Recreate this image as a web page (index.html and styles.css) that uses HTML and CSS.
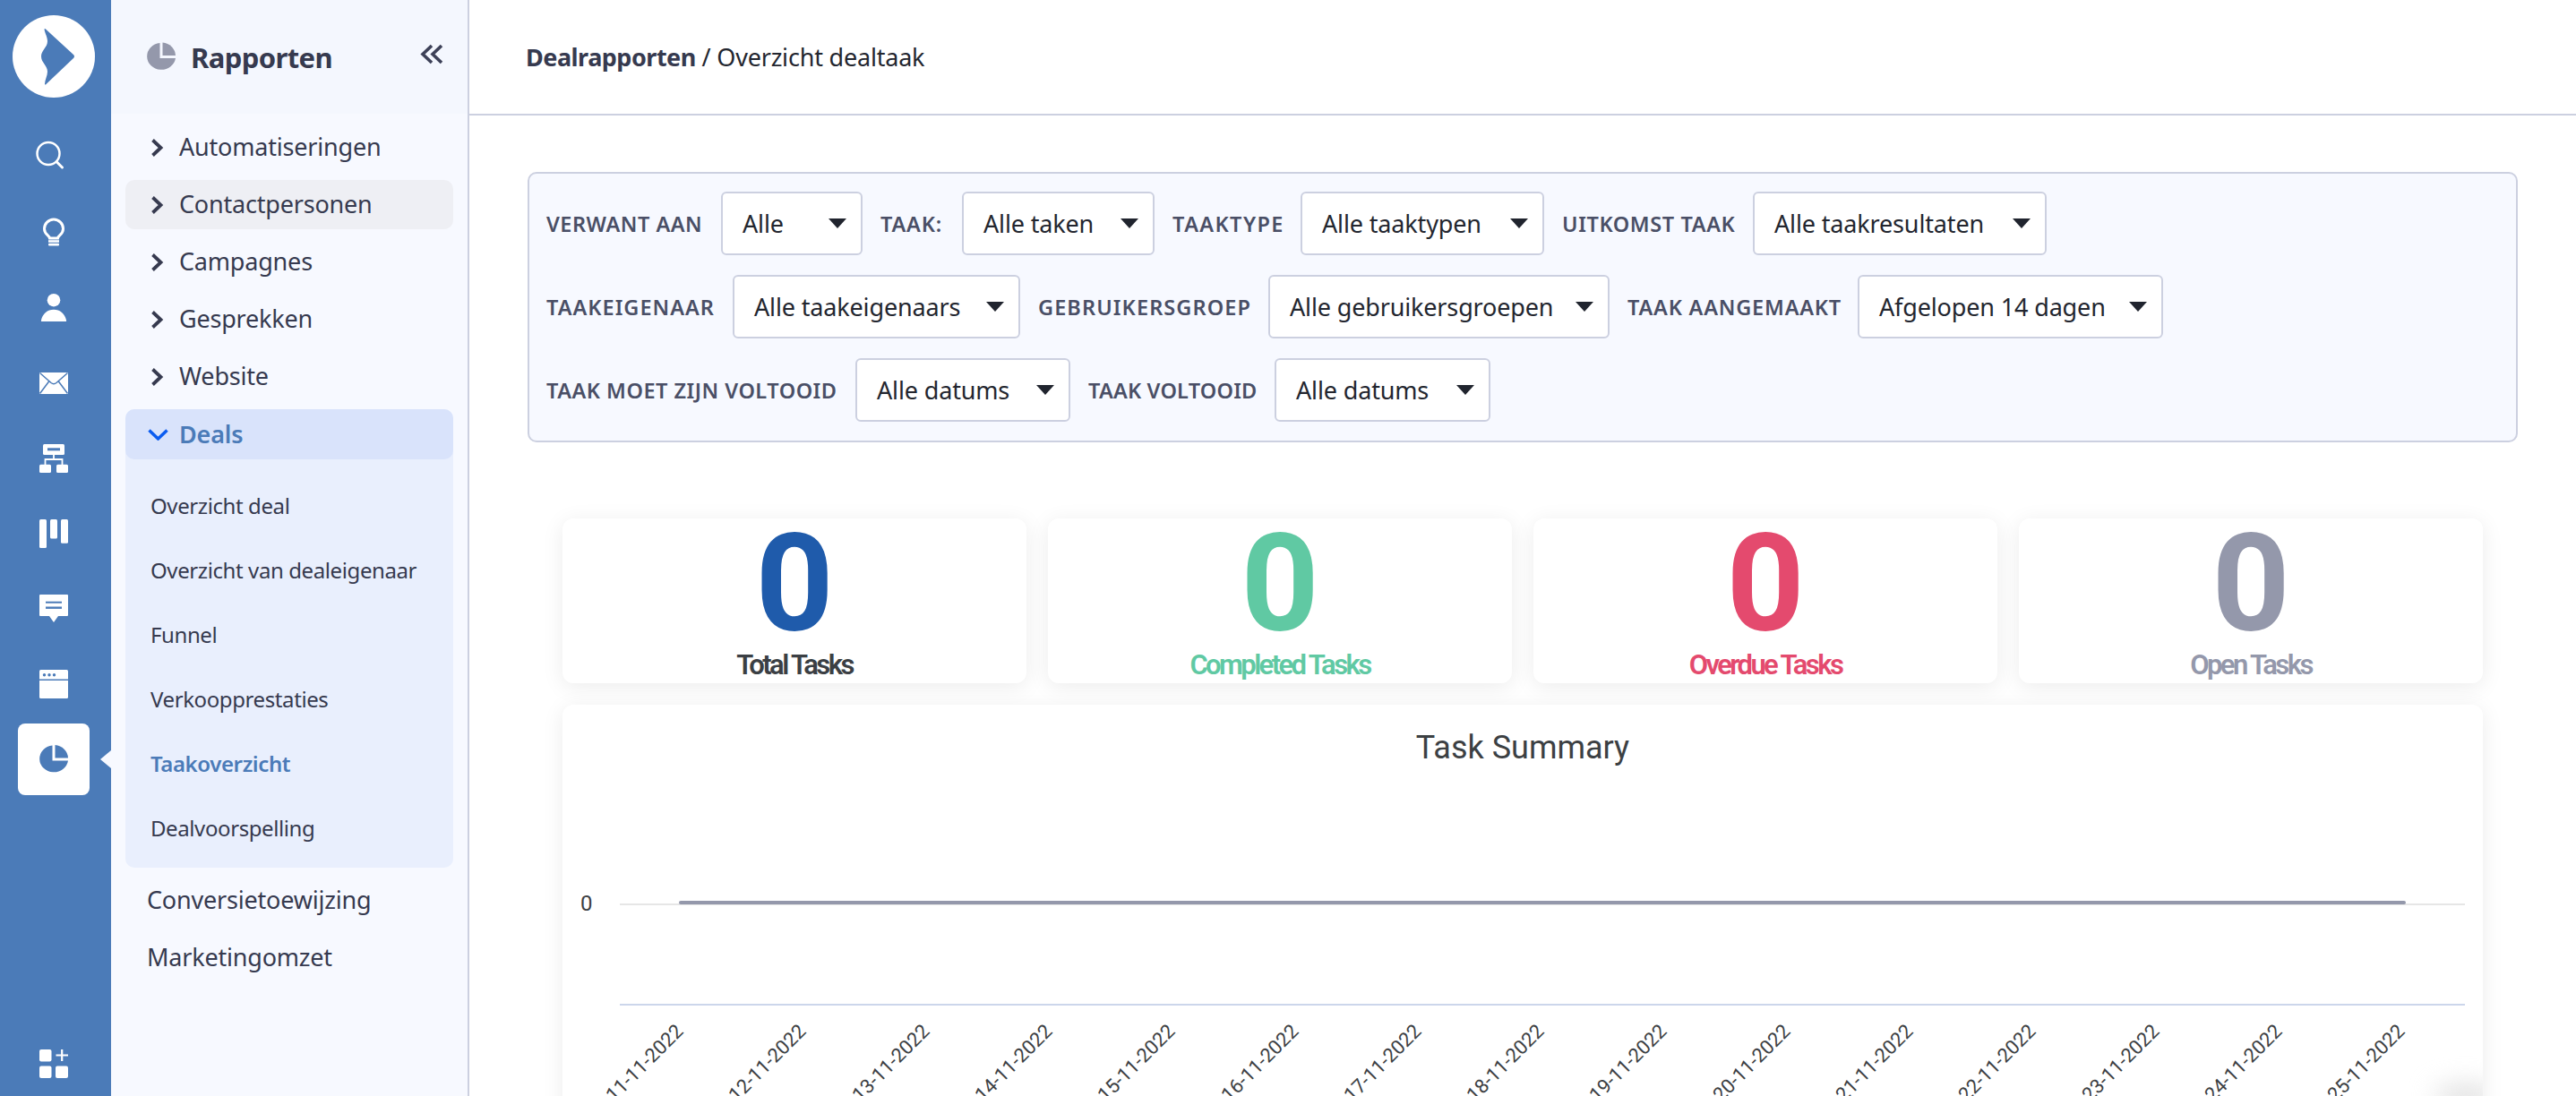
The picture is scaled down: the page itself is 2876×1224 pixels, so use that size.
FILE: index.html
```html
<!DOCTYPE html>
<html lang="nl">
<head>
  <meta charset="UTF-8">
  <title>Overzicht dealtaak</title>
  <link rel="stylesheet" href="styles.css">
</head>
<body>
  <!-- Smalle navigatiebalk -->
  <nav class="rail">
    <div class="logo">
      <svg width="92" height="92" viewBox="0 0 92 92"><path d="M35.5 15.5 Q36 14.5 37 15.5 L68 44 Q70 46 68 48 L37.500 77 Q36.500 78 36 77 C36 72 39 68 39 63 C39 56 32 53 32 46 C32 39 39 36 39 29 C39 24 36 20 35.500 15.500Z"/></svg>
    </div>
    <a class="rail-item">
      <svg class="ic" viewBox="0 0 32 32"><circle cx="10" cy="11.500" r="12.500" fill="none" stroke="#fff" stroke-width="2.500"/><path d="M19.500 21 L25.500 27" stroke="#fff" stroke-width="3" stroke-linecap="round"/></svg>
    </a>
    <a class="rail-item">
      <svg class="ic" viewBox="0 0 32 32"><path d="M11.500 22 C11 18.500 5.500 18 5.500 11.500 a10.500 10.500 0 0 1 21 0 C26.500 18 21 18.500 20.500 22 Z" fill="none" stroke="#fff" stroke-width="3"/><rect x="10" y="24.200" width="12" height="2.500" fill="#fff"/><rect x="10" y="27.800" width="12" height="2.600" rx="1" fill="#fff"/></svg>
    </a>
    <a class="rail-item">
      <svg class="ic" viewBox="0 0 32 32"><circle cx="16" cy="7.200" r="7.300" fill="#fff"/><path d="M2.500 31 Q1.500 31 2 29.500 C3.500 22.500 9 17.800 16 17.800 S28.500 22.500 30 29.500 Q30.500 31 29.500 31Z" fill="#fff"/></svg>
    </a>
    <a class="rail-item">
      <svg class="ic" viewBox="0 0 32 32"><rect x="0" y="4" width="32" height="24" fill="#fff"/><path d="M0.500 4.500 L13 15.500 Q16 18 19 15.500 L31.500 4.500 M0.500 27.500 L11 13.500 M31.500 27.500 L21 13.500" fill="none" stroke="#4b7bb8" stroke-width="1.500"/></svg>
    </a>
    <a class="rail-item">
      <svg class="ic" viewBox="0 0 32 32"><rect x="4" y="0" width="24" height="12" rx="1.500" fill="#fff"/><rect x="9" y="4.300" width="14" height="3" fill="#4b7bb8"/><path d="M16 12 V17 M6.500 23 V17 H25.500 V23" fill="none" stroke="#fff" stroke-width="1.800"/><rect x="0" y="22.700" width="13" height="9.300" rx="1.500" fill="#fff"/><rect x="19" y="22.700" width="13" height="9.300" rx="1.500" fill="#fff"/></svg>
    </a>
    <a class="rail-item">
      <svg class="ic" viewBox="0 0 32 32"><rect x="0" y="0" width="8" height="32" rx="1.500" fill="#fff"/><rect x="12" y="0" width="8" height="21.500" rx="1.500" fill="#fff"/><rect x="24" y="0" width="8" height="26.700" rx="1.500" fill="#fff"/></svg>
    </a>
    <a class="rail-item">
      <svg class="ic" viewBox="0 0 32 32"><path d="M1 0 H31 Q32 0 32 1 V23 Q32 24 31 24 H21 L16 31 L11 24 H1 Q0 24 0 23 V1 Q0 0 1 0Z" fill="#fff"/><rect x="7" y="7.700" width="18" height="2" fill="#4b7bb8"/><rect x="7" y="13.500" width="18" height="2.400" fill="#4b7bb8"/></svg>
    </a>
    <a class="rail-item">
      <svg class="ic" viewBox="0 0 32 32"><rect x="0" y="0" width="32" height="32" rx="1.500" fill="#fff"/><rect x="0" y="10.500" width="32" height="1.500" fill="#4b7bb8"/><circle cx="5.500" cy="5.800" r="1.700" fill="#4b7bb8"/><circle cx="11" cy="5.800" r="1.700" fill="#4b7bb8"/><circle cx="16.500" cy="5.800" r="1.700" fill="#4b7bb8"/></svg>
    </a>
    <a class="rail-item active">
      <svg class="ic" viewBox="0 0 32 32"><path d="M14.500 0.400 V17.500 H32 A16 15 0 1 1 14.500 0.400Z" fill="#4b7bb8"/><path d="M17.500 0 A16 15 0 0 1 32 14.500 H17.500Z" fill="#4b7bb8"/></svg>
    </a>
    <a class="rail-bottom">
      <svg class="ic" viewBox="0 0 32 32"><rect x="0" y="0" width="13.500" height="13.500" rx="2" fill="#fff"/><rect x="0" y="18.500" width="13.500" height="13.500" rx="2" fill="#fff"/><rect x="18" y="18.500" width="14" height="13.500" rx="2" fill="#fff"/><path d="M18.500 6.500 H32 M25.200 0 V13" stroke="#fff" stroke-width="2.200"/></svg>
    </a>
  </nav>

  <!-- Rapporten menu -->
  <aside class="sidebar">
    <div class="side-head">
      <svg class="head-pie" viewBox="0 0 32 32"><path d="M14.500 0.400 V17.500 H32 A16 15 0 1 1 14.500 0.400Z"/><path d="M17.500 0 A16 15 0 0 1 32 14.500 H17.500Z"/></svg>
      <span class="side-title">Rapporten</span>
      <svg class="collapse" viewBox="0 0 25 23"><path d="M13 2 L3 11.500 L13 21 M24 2 L14 11.500 L24 21" fill="none" stroke="#3d4158" stroke-width="3.600"/></svg>
    </div>
    <ul class="menu">
      <li class="menu-row"><svg class="chev" viewBox="0 0 13 20"><path d="M1.500 1.500 L10.500 10 L1.500 18.500"/></svg>Automatiseringen</li>
      <li class="menu-row hover"><svg class="chev" viewBox="0 0 13 20"><path d="M1.500 1.500 L10.500 10 L1.500 18.500"/></svg>Contactpersonen</li>
      <li class="menu-row"><svg class="chev" viewBox="0 0 13 20"><path d="M1.500 1.500 L10.500 10 L1.500 18.500"/></svg>Campagnes</li>
      <li class="menu-row"><svg class="chev" viewBox="0 0 13 20"><path d="M1.500 1.500 L10.500 10 L1.500 18.500"/></svg>Gesprekken</li>
      <li class="menu-row"><svg class="chev" viewBox="0 0 13 20"><path d="M1.500 1.500 L10.500 10 L1.500 18.500"/></svg>Website</li>
      <li class="menu-group">
        <div class="menu-row open"><svg class="chev-down" viewBox="0 0 23 13"><path d="M1.500 1.500 L11.500 11 L21.500 1.500"/></svg>Deals</div>
        <ul class="submenu">
          <li>Overzicht deal</li>
          <li>Overzicht van dealeigenaar</li>
          <li>Funnel</li>
          <li>Verkoopprestaties</li>
          <li class="current">Taakoverzicht</li>
          <li>Dealvoorspelling</li>
        </ul>
      </li>
      <li class="menu-row plain">Conversietoewijzing</li>
      <li class="menu-row plain">Marketingomzet</li>
    </ul>
  </aside>

  <main class="main">
    <header class="topbar"><b>Dealrapporten</b> / Overzicht dealtaak</header>

    <section class="filters">
      <div class="filter-row">
        <label class="l-verwant">Verwant aan</label>
        <div class="select sel-alle"><span>Alle</span><i></i></div>
        <label class="l-taak">Taak:</label>
        <div class="select sel-taken"><span>Alle taken</span><i></i></div>
        <label class="l-type">Taaktype</label>
        <div class="select sel-typen"><span>Alle taaktypen</span><i></i></div>
        <label class="l-uitkomst">Uitkomst taak</label>
        <div class="select sel-result"><span>Alle taakresultaten</span><i></i></div>
      </div>
      <div class="filter-row">
        <label class="l-eigenaar">Taakeigenaar</label>
        <div class="select sel-eigen"><span>Alle taakeigenaars</span><i></i></div>
        <label class="l-groep">Gebruikersgroep</label>
        <div class="select sel-groep"><span>Alle gebruikersgroepen</span><i></i></div>
        <label class="l-aangemaakt">Taak aangemaakt</label>
        <div class="select sel-14"><span>Afgelopen 14 dagen</span><i></i></div>
      </div>
      <div class="filter-row">
        <label class="l-moet">Taak moet zijn voltooid</label>
        <div class="select sel-datum"><span>Alle datums</span><i></i></div>
        <label class="l-voltooid">Taak voltooid</label>
        <div class="select sel-datum2"><span>Alle datums</span><i></i></div>
      </div>
    </section>

    <section class="report">
      <div class="stats">
        <div class="stat total"><div class="num">0</div><div class="cap">Total Tasks</div></div>
        <div class="stat done"><div class="num">0</div><div class="cap">Completed Tasks</div></div>
        <div class="stat late"><div class="num">0</div><div class="cap">Overdue Tasks</div></div>
        <div class="stat open"><div class="num">0</div><div class="cap">Open Tasks</div></div>
      </div>

      <div class="chart-card">
        <h2>Task Summary</h2>
        <svg class="chart" width="2144" height="440" viewBox="0 0 2144 440">
          <text class="y-label" x="20" y="140">0</text>
          <rect x="64" y="132" width="2060" height="2" fill="#e6e6e6"/>
          <rect x="130" y="129" width="1928" height="4" rx="2" fill="#9498ab"/>
          <rect x="64" y="244" width="2060" height="2" fill="#ccd6eb"/>
          <text transform="translate(136,276) rotate(-45)">11-11-2022</text>
          <text transform="translate(273,276) rotate(-45)">12-11-2022</text>
          <text transform="translate(411,276) rotate(-45)">13-11-2022</text>
          <text transform="translate(548,276) rotate(-45)">14-11-2022</text>
          <text transform="translate(685,276) rotate(-45)">15-11-2022</text>
          <text transform="translate(823,276) rotate(-45)">16-11-2022</text>
          <text transform="translate(960,276) rotate(-45)">17-11-2022</text>
          <text transform="translate(1097,276) rotate(-45)">18-11-2022</text>
          <text transform="translate(1234,276) rotate(-45)">19-11-2022</text>
          <text transform="translate(1372,276) rotate(-45)">20-11-2022</text>
          <text transform="translate(1509,276) rotate(-45)">21-11-2022</text>
          <text transform="translate(1646,276) rotate(-45)">22-11-2022</text>
          <text transform="translate(1784,276) rotate(-45)">23-11-2022</text>
          <text transform="translate(1921,276) rotate(-45)">24-11-2022</text>
          <text transform="translate(2058,276) rotate(-45)">25-11-2022</text>
        </svg>
        <div class="widget-shade"></div>
      </div>
    </section>
  </main>
</body>
</html>
```

FILE: styles.css
```css
:root {
  --blauw: #4b7bb8;
  --tekst: #363a4f;
  --rand: #ccd0e0;
  --paneel: #f7f9ff;
}
* { box-sizing: border-box; }
html, body {
  margin: 0;
  padding: 0;
  height: 1224px;
  overflow: hidden;
  background: #fff;
}
body {
  display: flex;
  font-family: "Noto Sans", Arial, sans-serif;
  color: var(--tekst);
}

/* Smalle balk */
.rail {
  width: 124px;
  flex: none;
  background: var(--blauw);
  display: flex;
  flex-direction: column;
  align-items: center;
  padding: 17px 4px 0 0;
  position: relative;
}
.logo {
  width: 92px;
  height: 92px;
  border-radius: 50%;
  background: #fff;
  margin-bottom: 27px;
}
.logo svg { display: block; fill: var(--blauw); }
.rail-item {
  width: 80px;
  height: 80px;
  margin-bottom: 4px;
  border-radius: 8px;
  display: flex;
  align-items: center;
  justify-content: center;
  position: relative;
}
.rail-item.active { background: #fff; }
.rail-item.active::after {
  content: "";
  position: absolute;
  left: 92px;
  top: 30px;
  border: 10px solid transparent;
  border-left: 0;
  border-right: 12px solid var(--paneel);
}
.ic { width: 32px; height: 32px; overflow: visible; display: block; }
.rail-bottom { margin-top: auto; margin-bottom: 20px; }

/* Rapporten menu */
.sidebar {
  width: 400px;
  flex: none;
  background: var(--paneel);
  border-right: 2px solid var(--rand);
}
.side-head {
  height: 127px;
  background: #f4f7fe;
  display: flex;
  align-items: center;
  padding: 0 28px 0 40px;
}
.head-pie { width: 32px; height: 33px; fill: #9498ab; flex: none; }
.side-title {
  margin-left: 17px;
  font-size: 31px;
  font-weight: 700;
  letter-spacing: -.6px;
  flex: 1;
}
.collapse { width: 25px; height: 23px; margin-top: -6px; overflow: visible; }
.menu, .submenu { list-style: none; margin: 0; padding: 0; }
.menu { padding: 10px 16px 0 16px; }
.menu-row {
  height: 55px;
  margin-bottom: 9px;
  border-radius: 10px;
  display: flex;
  align-items: center;
  padding: 0 0 2px 29px;
  font-size: 27px;
  letter-spacing: -.2px;
}
.menu-row.hover { background: #eeeff4; }
.menu-row.plain { padding-left: 24px; }
.chev { width: 13px; height: 20px; margin: 2px 18px 0 0; flex: none; overflow: visible; }
.chev path { fill: none; stroke: #363a4f; stroke-width: 3.800px; }
.menu-row.open {
  margin: 0;
  height: 56px;
  background: #d9e3fb;
  color: var(--blauw);
  font-weight: 600;
  padding-left: 25px;
}
.chev-down { width: 23px; height: 13px; margin: 2px 12px 0 0; flex: none; }
.chev-down path { fill: none; stroke: #0b5cf0; stroke-width: 3.500px; }
.menu-group { margin-bottom: 9px; border-radius: 10px; background: #e9effd; }
.submenu { padding: 16px 0 8px 28px; }
.submenu li {
  height: 72px;
  display: flex;
  align-items: center;
  padding-bottom: 2px;
  font-size: 24px;
  letter-spacing: -.4px;
}
.submenu li.current { color: var(--blauw); font-weight: 600; }

/* Hoofdvlak */
.main { flex: 1; min-width: 0; }
.topbar {
  height: 129px;
  border-bottom: 2px solid var(--rand);
  display: flex;
  align-items: center;
  padding-left: 63px;
  font-size: 27px;
  letter-spacing: -.2px;
  color: #23262f;
  white-space: pre;
}
.topbar b { font-weight: 700; color: #363a4f; letter-spacing: -.5px; }
.filters {
  margin: 63px 65px 0 65px;
  height: 302px;
  background: var(--paneel);
  border: 2px solid var(--rand);
  border-radius: 10px;
  padding: 20px 0 0 19px;
}
.filter-row {
  display: flex;
  align-items: center;
  gap: 20px;
  height: 71px;
  margin-bottom: 22px;
}
.filter-row label {
  flex: none;
  font-size: 23.500px;
  font-weight: 600;
  text-transform: uppercase;
  letter-spacing: .5px;
  color: #4a4f66;
  white-space: nowrap;
}
.l-verwant { width: 175px; }
.l-taak { width: 71px; letter-spacing: .8px !important; }
.l-type { width: 123px; letter-spacing: 1.400px !important; }
.l-uitkomst { width: 193px; letter-spacing: .6px !important; }
.l-eigenaar { width: 188px; letter-spacing: 1px !important; }
.l-groep { width: 237px; letter-spacing: 1.100px !important; }
.l-aangemaakt { width: 237px; letter-spacing: .8px !important; }
.l-moet { width: 325px; }
.l-voltooid { width: 188px; letter-spacing: .2px !important; }
.select {
  flex: none;
  height: 71px;
  background: #fff;
  border: 2px solid var(--rand);
  border-radius: 6px;
  display: flex;
  align-items: center;
  justify-content: space-between;
  padding: 0 16px 0 22px;
  font-size: 27px;
  letter-spacing: -.15px;
  color: #23262f;
  white-space: nowrap;
}
.select i {
  width: 0;
  height: 0;
  border-left: 10px solid transparent;
  border-right: 10px solid transparent;
  border-top: 11px solid #20242e;
}
.sel-alle { width: 158px; }
.sel-taken { width: 215px; }
.sel-typen { width: 272px; }
.sel-result { width: 328px; }
.sel-eigen { width: 321px; }
.sel-groep { width: 381px; }
.sel-14 { width: 341px; }
.sel-datum { width: 240px; }
.sel-datum2 { width: 241px; }

/* Rapport */
.report {
  margin: 85px 104px 0 104px;
  font-family: Roboto, Arial, sans-serif;
}
.stats { display: grid; grid-template-columns: repeat(4, 518px); gap: 24px; }
.stat {
  height: 184px;
  background: #fff;
  border-radius: 12px;
  box-shadow: 0 4px 24px rgba(0, 0, 0, .08);
  text-align: center;
  padding-top: 3px;
}
.num {
  font-size: 152px;
  font-weight: 700;
  line-height: 141px;
}
.cap {
  font-size: 31px;
  font-weight: 600;
  letter-spacing: -2.600px;
  line-height: 40px;
}
.total .num { color: #1f5bab; }
.total .cap { color: #3b3f44; }
.done .num, .done .cap { color: #60c9a3; }
.late .num, .late .cap { color: #e44a6e; }
.open .num, .open .cap { color: #9498ab; }
.chart-card {
  position: relative;
  margin-top: 24px;
  height: 520px;
  background: #fff;
  border-radius: 12px;
  box-shadow: 0 4px 24px rgba(0, 0, 0, .08);
  overflow: hidden;
}
.chart-card h2 {
  margin: 0;
  height: 90px;
  padding-top: 26px;
  font-size: 36px;
  line-height: 44px;
  font-weight: 400;
  text-align: center;
  color: #3c4043;
}
.chart { display: block; }
.chart text {
  font-family: Roboto, Arial, sans-serif;
  font-size: 22px;
  fill: #3c4043;
  text-anchor: end;
}
.chart text.y-label { font-size: 24px; text-anchor: start; }
.widget-shade {
  position: absolute;
  left: 2090px;
  top: 425px;
  width: 70px;
  height: 24px;
  background: #ddd;
  border-radius: 50%;
  filter: blur(14px);
}
```
